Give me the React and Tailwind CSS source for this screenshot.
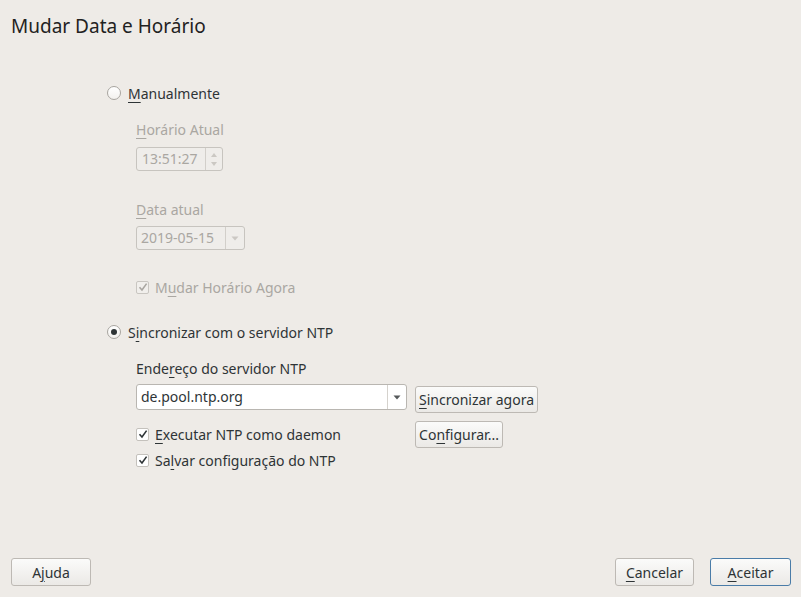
import React from 'react';

// ── Small widgets ────────────────────────────────────────────────────────────
function Mn({ children }) {
  return <span className="underline underline-offset-[3px] decoration-1">{children}</span>;
}

function Radio({ checked }) {
  return (
    <span className="w-[14px] h-[14px] rounded-full border border-[#a8a5a0] bg-gradient-to-b from-white to-[#f3f1ee] flex items-center justify-center shrink-0">
      {checked && <span className="w-[6px] h-[6px] rounded-full bg-[#2e3436]" />}
    </span>
  );
}

function Check({ disabled }) {
  return (
    <span
      className={
        'w-[13px] h-[13px] border flex items-center justify-center shrink-0 rounded-[2px] ' +
        (disabled ? 'border-[#c9c6c1] bg-[#f1efec]' : 'border-[#c4c1bc] bg-white')
      }
    >
      <svg width="10" height="10" viewBox="0 0 10 10">
        <path
          d="M1.5 5.2 L4 8 L8.6 1.6"
          fill="none"
          stroke={disabled ? '#a9a6a1' : '#2e3436'}
          strokeWidth="1.6"
        />
      </svg>
    </span>
  );
}

function Button({ children, className, focus }) {
  return (
    <button
      className={
        'shrink-0 rounded-[3px] border bg-gradient-to-b from-[#fbfbfa] to-[#ebe9e6] text-[14px] text-[#2e3436] px-[3px] whitespace-nowrap ' +
        (focus ? 'border-[#4a7ca8]' : 'border-[#bdb9b4]') +
        ' ' +
        className
      }
    >
      {children}
    </button>
  );
}

function ArrowDown({ color }) {
  return (
    <svg width="8" height="5" viewBox="0 0 8 5">
      <path d="M0.5 0.5 L7.5 0.5 L4 4.5 Z" fill={color} />
    </svg>
  );
}

export default function App() {
  return (
    <div className="w-[801px] h-[597px] bg-[#eeebe7] flex flex-col font-['Noto_Sans',sans-serif] text-[14px] text-[#2e3436] overflow-hidden">
      <h1 className="pl-[11px] pt-[13px] text-[19px] leading-[26px] font-normal text-[#1f2222]">Mudar Data e Horário</h1>

      <div className="flex-1 pl-[107px] pt-[44px]">
        {/* Manual */}
        <label className="flex items-center gap-[7px] h-[20px]">
          <Radio />
          <span><Mn>M</Mn>anualmente</span>
        </label>

        <div className="pl-[29px] text-[#aaa7a2]">
          <div className="mt-[17px] h-[20px] leading-[20px]"><Mn>H</Mn>orário Atual</div>
          <div className="mt-[7px] flex w-[87px] h-[24px] border border-[#c7c4bf] rounded-[3px] bg-[#efedea]">
            <div className="flex-1 pl-[5px] leading-[22px] text-[14px]">13:51:27</div>
            <div className="w-[17px] border-l border-[#d2cfca] flex flex-col items-center justify-center gap-[5px]">
              <svg width="6" height="4" viewBox="0 0 6 4"><path d="M0 4 L3 0 L6 4 Z" fill="#cbc8c3" /></svg>
              <svg width="6" height="4" viewBox="0 0 6 4"><path d="M0 0 L6 0 L3 4 Z" fill="#cbc8c3" /></svg>
            </div>
          </div>

          <div className="mt-[29px] h-[20px] leading-[20px]"><Mn>D</Mn>ata atual</div>
          <div className="mt-[6px] flex w-[109px] h-[24px] border border-[#c7c4bf] rounded-[3px] bg-[#efedea]">
            <div className="flex-1 pl-[4px] leading-[22px] text-[14px]">2019-05-15</div>
            <div className="w-[19px] border-l border-[#d2cfca] flex items-center justify-center">
              <ArrowDown color="#cbc8c3" />
            </div>
          </div>

          <label className="mt-[27px] flex items-center gap-[6px] h-[20px]">
            <Check disabled />
            <span>M<Mn>u</Mn>dar Horário Agora</span>
          </label>
        </div>

        {/* NTP */}
        <label className="mt-[25px] flex items-center gap-[7px] h-[20px]">
          <Radio checked />
          <span>S<Mn>i</Mn>ncronizar com o servidor NTP</span>
        </label>

        <div className="pl-[29px]">
          <div className="mt-[17px] h-[20px] leading-[20px]">Ende<Mn>r</Mn>eço do servidor NTP</div>

          <div className="mt-[5px] flex items-start gap-[8px]">
            <div className="flex w-[271px] h-[26px] border border-[#b9b6b1] rounded-[3px] bg-white">
              <div className="flex-1 pl-[4px] leading-[24px] text-[14px]">de.pool.ntp.org</div>
              <div className="w-[19px] border-l border-[#d5d2cd] flex items-center justify-center">
                <ArrowDown color="#55595a" />
              </div>
            </div>
            <Button className="mt-[2px] w-[123px] h-[27px]"><Mn>S</Mn>incronizar agora</Button>
          </div>

          <div className="mt-[8px] flex items-start">
            <div className="w-[279px] pt-[3px]">
              <label className="flex items-center gap-[6px] h-[20px]">
                <Check />
                <span><Mn>E</Mn>xecutar NTP como daemon</span>
              </label>
              <label className="mt-[6px] flex items-center gap-[6px] h-[20px]">
                <Check />
                <span>Sa<Mn>l</Mn>var configuração do NTP</span>
              </label>
            </div>
            <Button className="w-[88px] h-[27px]">Co<Mn>n</Mn>figurar...</Button>
          </div>
        </div>
      </div>

      <div className="flex items-center pl-[11px] pr-[10px] pb-[11px]">
        <Button className="w-[80px] h-[28px]">A<Mn>j</Mn>uda</Button>
        <div className="flex-1" />
        <Button className="w-[79px] h-[28px]"><Mn>C</Mn>ancelar</Button>
        <div className="w-[16px]" />
        <Button className="w-[81px] h-[28px]" focus><Mn>A</Mn>ceitar</Button>
      </div>
    </div>
  );
}
